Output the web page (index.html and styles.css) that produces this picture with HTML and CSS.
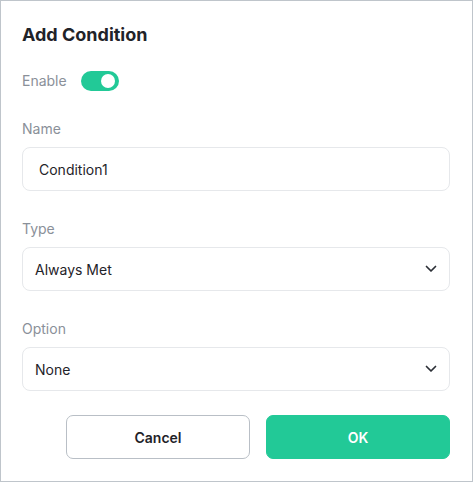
FILE: index.html
```html
<!DOCTYPE html>
<html lang="en">
<head>
<meta charset="utf-8">
<title>Add Condition</title>
<link rel="stylesheet" href="styles.css">
</head>
<body>
<div class="dialog">
  <h1 class="title">Add Condition</h1>
  <div class="enable-row">
    <span class="label">Enable</span>
    <span class="toggle"><span class="knob"></span></span>
  </div>
  <div class="field field-first">
    <div class="label">Name</div>
    <div class="input">Condition1</div>
  </div>
  <div class="field">
    <div class="label">Type</div>
    <div class="select">
      <span>Always Met</span>
      <svg class="chev" width="12" height="8" viewBox="0 0 12 8"><path d="M1.5 1.5 L6 6 L10.5 1.5" fill="none" stroke="#2b2f36" stroke-width="1.7" stroke-linecap="round" stroke-linejoin="round"/></svg>
    </div>
  </div>
  <div class="field">
    <div class="label">Option</div>
    <div class="select">
      <span>None</span>
      <svg class="chev" width="12" height="8" viewBox="0 0 12 8"><path d="M1.5 1.5 L6 6 L10.5 1.5" fill="none" stroke="#2b2f36" stroke-width="1.7" stroke-linecap="round" stroke-linejoin="round"/></svg>
    </div>
  </div>
  <div class="actions">
    <button class="btn btn-cancel">Cancel</button>
    <button class="btn btn-ok">OK</button>
  </div>
</div>
</body>
</html>
```

FILE: styles.css
```css
* { box-sizing: border-box; }
html, body { margin: 0; padding: 0; background: #fff; }
body { font-family: Inter, "Noto Sans", sans-serif; color: #1f2329; }
.dialog {
  width: 473px;
  height: 482px;
  border: 1px solid #bfc5cb;
  padding: 22px 22px 0 21px;
  display: flex;
  flex-direction: column;
}
.title {
  margin: 0;
  font-size: 18px;
  line-height: 24px;
  font-weight: 700;
  color: #1f2329;
}
.enable-row {
  margin-top: 24px;
  height: 20px;
  display: flex;
  align-items: center;
  gap: 14px;
}
.label {
  font-size: 14px;
  line-height: 20px;
  color: #8a9099;
}
.toggle {
  width: 38px;
  height: 20px;
  border-radius: 10px;
  background: #22c997;
  display: flex;
  align-items: center;
  justify-content: flex-end;
  padding-right: 4px;
}
.knob {
  width: 14px;
  height: 14px;
  border-radius: 50%;
  background: #fff;
}
.field { margin-top: 28px; display: flex; flex-direction: column; gap: 8px; }
.field-first { margin-top: 28px; }
.input, .select {
  height: 44px;
  border: 1px solid #e6e8eb;
  border-radius: 8px;
  font-size: 14px;
  color: #1f2329;
  display: flex;
  align-items: center;
}
.input { padding-left: 16px; }
.select { padding: 0 12px 0 12px; justify-content: space-between; }
.chev { display: block; }
.actions {
  margin-top: 24px;
  display: flex;
  justify-content: flex-end;
  gap: 16px;
}
.btn {
  width: 184px;
  height: 44px;
  border-radius: 7px;
  font-family: Inter, "Noto Sans", sans-serif;
  font-size: 14px;
  font-weight: 600;
  cursor: pointer;
}
.btn-cancel { background: #fff; border: 1px solid #b9bfc6; color: #1f2329; }
.btn-ok { background: #22c997; border: 1px solid #22c997; color: #fff; }
```
